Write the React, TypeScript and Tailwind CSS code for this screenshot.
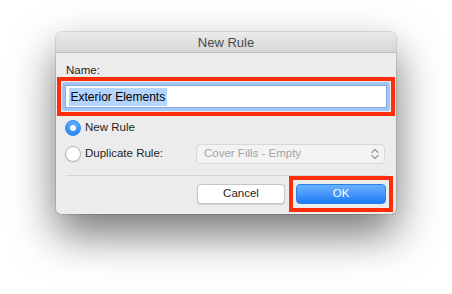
import React from 'react';

const font = { fontFamily: '"Liberation Sans", Arial, sans-serif' };

function Radio({ checked }: { checked: boolean }) {
  if (checked) {
    return (
      <div className="w-[16px] h-[16px] rounded-full bg-gradient-to-b from-[#5aaefc] to-[#2a86f8] border border-[#2f84ee] flex items-center justify-center shrink-0">
        <div className="w-[6px] h-[6px] rounded-full bg-white" />
      </div>
    );
  }
  return <div className="w-[16px] h-[16px] rounded-full bg-white border border-[#b4b4b4] shadow-[0_0.5px_0.5px_rgba(0,0,0,0.12)] shrink-0" />;
}

export default function App() {
  return (
    <div className="w-[452px] h-[294px] bg-white pt-[32px] pl-[56px] overflow-hidden" style={font}>
      <div className="w-[340px] h-[182px] rounded-[5px] bg-[#ececec] shadow-[0_20px_44px_rgba(0,0,0,0.55),0_0_0_0.5px_rgba(0,0,0,0.22)] flex flex-col">
        {/* Title bar */}
        <div className="h-[21px] rounded-t-[5px] bg-gradient-to-b from-[#ebebeb] to-[#d5d5d5] border-b border-[#bdbdbd] flex items-center justify-center text-[13px] text-[#4a4a4a] leading-none">
          New Rule
        </div>

        <div className="px-[10px] flex flex-col text-[#1e1e1e]">
          <div className="pt-[10px] h-[24px] text-[11.5px] leading-[14px]">Name:</div>

          {/* Name field, outlined in red */}
          <div className="-ml-[9px] -mr-[9px] h-[39px] border-4 border-[#ff2d0a] p-[1px]">
            <div className="h-[29px] rounded-[3px] border-[3px] border-[#a3c6f2]">
              <div className="h-full bg-white border border-[#7ea8de] flex items-center pl-[3px]">
                <span className="bg-[#b4d5fe] px-[1.5px] text-[12px] leading-[18px] text-black">Exterior Elements</span>
              </div>
            </div>
          </div>

          <div className="mt-[2px] h-[20px] flex items-center gap-[4px] -ml-[1px] text-[11.5px]">
            <Radio checked />
            <span>New Rule</span>
          </div>

          <div className="mt-[6px] h-[20px] flex items-center -ml-[1px] text-[11.5px]">
            <div className="flex items-center gap-[4px] w-[131px]">
              <Radio checked={false} />
              <span>Duplicate Rule:</span>
            </div>
            <div className="w-[189px] h-[20px] rounded-[4px] bg-[#f3f3f3] border border-[#d8d8d8] flex items-center pl-[7px] pr-[5px] text-[#a3a3a3]">
              <span className="flex-1">Cover Fills - Empty</span>
              <svg width="8" height="12" viewBox="0 0 8 12" fill="none" stroke="#9a9a9a" strokeWidth="1.3" strokeLinecap="round" strokeLinejoin="round">
                <path d="M1 4.5 L4 1.5 L7 4.5" />
                <path d="M1 7.5 L4 10.5 L7 7.5" />
              </svg>
            </div>
          </div>

          <div className="mt-[11px] h-px bg-[#d3d3d3]" />

          <div className="h-[36px] flex items-center justify-end gap-[4px] -mr-[7px] text-[11.5px]">
            <button className="w-[88px] h-[20px] rounded-[4px] bg-white border border-[#c6c6c6] shadow-[0_0.5px_1px_rgba(0,0,0,0.12)] text-[#1e1e1e] leading-none">
              Cancel
            </button>
            <div className="w-[104px] h-[36px] border-4 border-[#ff2d0a] px-[3px] py-[4px]">
              <button className="w-full h-[20px] rounded-[4px] bg-gradient-to-b from-[#68b1fd] to-[#1a7bf6] border border-[#2a7fe8] text-white leading-none">
                OK
              </button>
            </div>
          </div>
        </div>
      </div>
    </div>
  );
}
